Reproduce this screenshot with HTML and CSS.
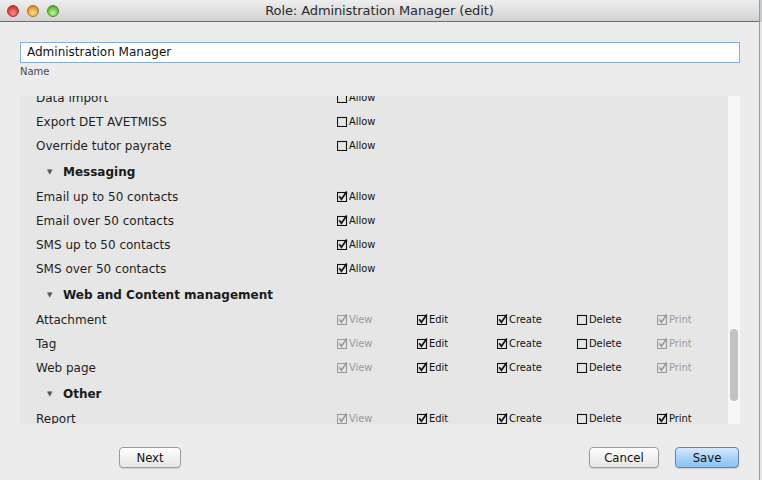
FILE: index.html
```html
<!DOCTYPE html>
<html>
<head>
<meta charset="utf-8">
<link rel="stylesheet" href="styles.css">
</head>
<body>
<div class="desk">
<div class="window">
  <div class="titlebar">
    <div class="lights">
      <span class="light red"></span>
      <span class="light orange"></span>
      <span class="light green"></span>
    </div>
    <div class="title">Role: Administration Manager (edit)</div>
  </div>
  <div class="content">
    <div class="input">Administration Manager</div>
    <div class="fieldlabel">Name</div>
    <div class="panel">
      <div class="viewport">
        <div class="list">
          <div class="row"><span class="name">Data import</span><span class="cb"><svg viewBox="0 0 11 11"><rect x="0.5" y="1.5" width="9" height="9"/></svg>Allow</span></div>
          <div class="row"><span class="name">Export DET AVETMISS</span><span class="cb"><svg viewBox="0 0 11 11"><rect x="0.5" y="1.5" width="9" height="9"/></svg>Allow</span></div>
          <div class="row"><span class="name">Override tutor payrate</span><span class="cb"><svg viewBox="0 0 11 11"><rect x="0.5" y="1.5" width="9" height="9"/></svg>Allow</span></div>
          <div class="group"><span class="tri">▼</span>Messaging</div>
          <div class="row"><span class="name">Email up to 50 contacts</span><span class="cb"><svg viewBox="0 0 11 11"><rect x="0.5" y="1.5" width="9" height="9"/><path d="M2.2 5.2 L4.4 8.2 L9.8 0.6"/></svg>Allow</span></div>
          <div class="row"><span class="name">Email over 50 contacts</span><span class="cb"><svg viewBox="0 0 11 11"><rect x="0.5" y="1.5" width="9" height="9"/><path d="M2.2 5.2 L4.4 8.2 L9.8 0.6"/></svg>Allow</span></div>
          <div class="row"><span class="name">SMS up to 50 contacts</span><span class="cb"><svg viewBox="0 0 11 11"><rect x="0.5" y="1.5" width="9" height="9"/><path d="M2.2 5.2 L4.4 8.2 L9.8 0.6"/></svg>Allow</span></div>
          <div class="row"><span class="name">SMS over 50 contacts</span><span class="cb"><svg viewBox="0 0 11 11"><rect x="0.5" y="1.5" width="9" height="9"/><path d="M2.2 5.2 L4.4 8.2 L9.8 0.6"/></svg>Allow</span></div>
          <div class="group"><span class="tri">▼</span>Web and Content management</div>
          <div class="row"><span class="name">Attachment</span>
            <span class="cb dis"><svg viewBox="0 0 11 11"><rect x="0.5" y="1.5" width="9" height="9"/><path d="M2.2 5.2 L4.4 8.2 L9.8 0.6"/></svg>View</span>
            <span class="cb"><svg viewBox="0 0 11 11"><rect x="0.5" y="1.5" width="9" height="9"/><path d="M2.2 5.2 L4.4 8.2 L9.8 0.6"/></svg>Edit</span>
            <span class="cb"><svg viewBox="0 0 11 11"><rect x="0.5" y="1.5" width="9" height="9"/><path d="M2.2 5.2 L4.4 8.2 L9.8 0.6"/></svg>Create</span>
            <span class="cb"><svg viewBox="0 0 11 11"><rect x="0.5" y="1.5" width="9" height="9"/></svg>Delete</span>
            <span class="cb dis"><svg viewBox="0 0 11 11"><rect x="0.5" y="1.5" width="9" height="9"/><path d="M2.2 5.2 L4.4 8.2 L9.8 0.6"/></svg>Print</span>
          </div>
          <div class="row"><span class="name">Tag</span>
            <span class="cb dis"><svg viewBox="0 0 11 11"><rect x="0.5" y="1.5" width="9" height="9"/><path d="M2.2 5.2 L4.4 8.2 L9.8 0.6"/></svg>View</span>
            <span class="cb"><svg viewBox="0 0 11 11"><rect x="0.5" y="1.5" width="9" height="9"/><path d="M2.2 5.2 L4.4 8.2 L9.8 0.6"/></svg>Edit</span>
            <span class="cb"><svg viewBox="0 0 11 11"><rect x="0.5" y="1.5" width="9" height="9"/><path d="M2.2 5.2 L4.4 8.2 L9.8 0.6"/></svg>Create</span>
            <span class="cb"><svg viewBox="0 0 11 11"><rect x="0.5" y="1.5" width="9" height="9"/></svg>Delete</span>
            <span class="cb dis"><svg viewBox="0 0 11 11"><rect x="0.5" y="1.5" width="9" height="9"/><path d="M2.2 5.2 L4.4 8.2 L9.8 0.6"/></svg>Print</span>
          </div>
          <div class="row"><span class="name">Web page</span>
            <span class="cb dis"><svg viewBox="0 0 11 11"><rect x="0.5" y="1.5" width="9" height="9"/><path d="M2.2 5.2 L4.4 8.2 L9.8 0.6"/></svg>View</span>
            <span class="cb"><svg viewBox="0 0 11 11"><rect x="0.5" y="1.5" width="9" height="9"/><path d="M2.2 5.2 L4.4 8.2 L9.8 0.6"/></svg>Edit</span>
            <span class="cb"><svg viewBox="0 0 11 11"><rect x="0.5" y="1.5" width="9" height="9"/><path d="M2.2 5.2 L4.4 8.2 L9.8 0.6"/></svg>Create</span>
            <span class="cb"><svg viewBox="0 0 11 11"><rect x="0.5" y="1.5" width="9" height="9"/></svg>Delete</span>
            <span class="cb dis"><svg viewBox="0 0 11 11"><rect x="0.5" y="1.5" width="9" height="9"/><path d="M2.2 5.2 L4.4 8.2 L9.8 0.6"/></svg>Print</span>
          </div>
          <div class="group"><span class="tri">▼</span>Other</div>
          <div class="row"><span class="name">Report</span>
            <span class="cb dis"><svg viewBox="0 0 11 11"><rect x="0.5" y="1.5" width="9" height="9"/><path d="M2.2 5.2 L4.4 8.2 L9.8 0.6"/></svg>View</span>
            <span class="cb"><svg viewBox="0 0 11 11"><rect x="0.5" y="1.5" width="9" height="9"/><path d="M2.2 5.2 L4.4 8.2 L9.8 0.6"/></svg>Edit</span>
            <span class="cb"><svg viewBox="0 0 11 11"><rect x="0.5" y="1.5" width="9" height="9"/><path d="M2.2 5.2 L4.4 8.2 L9.8 0.6"/></svg>Create</span>
            <span class="cb"><svg viewBox="0 0 11 11"><rect x="0.5" y="1.5" width="9" height="9"/></svg>Delete</span>
            <span class="cb"><svg viewBox="0 0 11 11"><rect x="0.5" y="1.5" width="9" height="9"/><path d="M2.2 5.2 L4.4 8.2 L9.8 0.6"/></svg>Print</span>
          </div>
        </div>
      </div>
      <div class="scrollbar"><div class="thumb"></div></div>
    </div>
    <div class="footer">
      <button class="btn next">Next</button>
      <div class="spacer"></div>
      <button class="btn cancel">Cancel</button>
      <button class="btn save">Save</button>
    </div>
  </div>
</div>
<div class="edge"></div>
</div>
</body>
</html>
```
FILE: styles.css
```css
html, body {
  margin: 0;
  padding: 0;
  width: 762px;
  height: 480px;
  overflow: hidden;
  background: #ececec;
}
.desk {
  display: flex;
  width: 762px;
  height: 480px;
}
.window {
  width: 759px;
  height: 480px;
  background: #ececec;
  font-family: "DejaVu Sans", sans-serif;
  color: #1a1a1a;
}
.edge {
  flex: 1;
  background: linear-gradient(#c8ccd2 0, #c8ccd2 22px, #e6e6e6 22px);
  border-left: 1px solid #9a9a9a;
}
.titlebar {
  height: 21px;
  border-bottom: 1px solid #6e6e6e;
  background: linear-gradient(#eeeeee, #d2d2d2);
  display: flex;
  align-items: center;
  position: relative;
}
.lights {
  display: flex;
  gap: 8px;
  padding-left: 7px;
  padding-top: 1px;
}
.light {
  width: 12px;
  height: 12px;
  border-radius: 50%;
  box-sizing: border-box;
}
.light.red { background: radial-gradient(circle at 50% 70%, #ff9a8f 0, #e2463c 55%, #a52a22 100%); border: 1px solid #9d3a33; }
.light.orange { background: radial-gradient(circle at 50% 70%, #ffe09a 0, #eda43a 55%, #b06e14 100%); border: 1px solid #a47628; }
.light.green { background: radial-gradient(circle at 50% 70%, #c8f5a0 0, #73c44a 55%, #3c8a20 100%); border: 1px solid #4e8a32; }
.title {
  position: absolute;
  left: 0;
  right: 0;
  top: 3px;
  text-align: center;
  font-size: 13px;
  color: #2a2a2a;
  letter-spacing: -0.1px;
}
.content {
  padding: 20px 19px 0 20px;
}
.input {
  height: 21px;
  box-sizing: border-box;
  border: 1px solid #86aedb;
  background: #ffffff;
  font-size: 12px;
  line-height: 19px;
  padding-left: 6px;
  color: #111;
}
.fieldlabel {
  font-size: 10px;
  color: #4a4a4a;
  margin-top: 2px;
  height: 14px;
  line-height: 14px;
}
.panel {
  margin-top: 17px;
  height: 328px;
  display: flex;
}
.viewport {
  flex: 1;
  background: #e6e6e6;
  overflow: hidden;
}
.list {
  margin-top: -10px;
  padding-left: 16px;
}
.row {
  height: 24px;
  display: flex;
  align-items: center;
  font-size: 12px;
}
.name {
  width: 301px;
  flex: none;
  color: #1e1e1e;
}
.cb {
  width: 80px;
  flex: none;
  display: flex;
  align-items: center;
  font-family: "DejaVu Sans Condensed", "DejaVu Sans", sans-serif;
  font-size: 11px;
  color: #111;
  position: relative;
  top: -1px;
}
.cb svg {
  width: 11px;
  height: 11px;
  margin-right: 1px;
  fill: none;
  stroke: #111;
  stroke-width: 1.1;
}
.cb svg path {
  stroke-width: 1.7;
}
.cb.dis { color: #9a9a9a; }
.cb.dis svg { stroke: #9a9a9a; }
.group {
  height: 27px;
  display: flex;
  align-items: center;
  font-size: 12px;
  font-weight: bold;
  color: #1a1a1a;
}
.tri {
  font-size: 7px;
  color: #555;
  width: 16px;
  margin-left: 11px;
  font-weight: normal;
}
.scrollbar {
  width: 12px;
  background: #f7f7f7;
  padding-top: 233px;
  box-sizing: border-box;
}
.thumb {
  width: 8px;
  height: 72px;
  margin-left: 2px;
  border-radius: 4px;
  background: #c2c2c2;
}
.footer {
  display: flex;
  margin-top: 23px;
  padding-left: 99px;
  padding-right: 1px;
  align-items: center;
}
.spacer { flex: 1; }
.btn {
  height: 21px;
  box-sizing: border-box;
  border: 1px solid #9b9b9b;
  border-radius: 4px;
  background: linear-gradient(#ffffff, #f1f1f1 50%, #e6e6e6);
  font-family: "Liberation Sans Narrow", "DejaVu Sans Condensed", sans-serif;
  font-size: 13px;
  color: #111;
  padding: 0;
  box-shadow: 0 1px 1px rgba(0,0,0,0.12);
}
.next { width: 62px; }
.cancel { width: 70px; margin-right: 16px; }
.save {
  width: 64px;
  border-color: #5d82b4;
  background: linear-gradient(#d6ebfc, #a9d3f8 50%, #8cc3f3);
}
```
